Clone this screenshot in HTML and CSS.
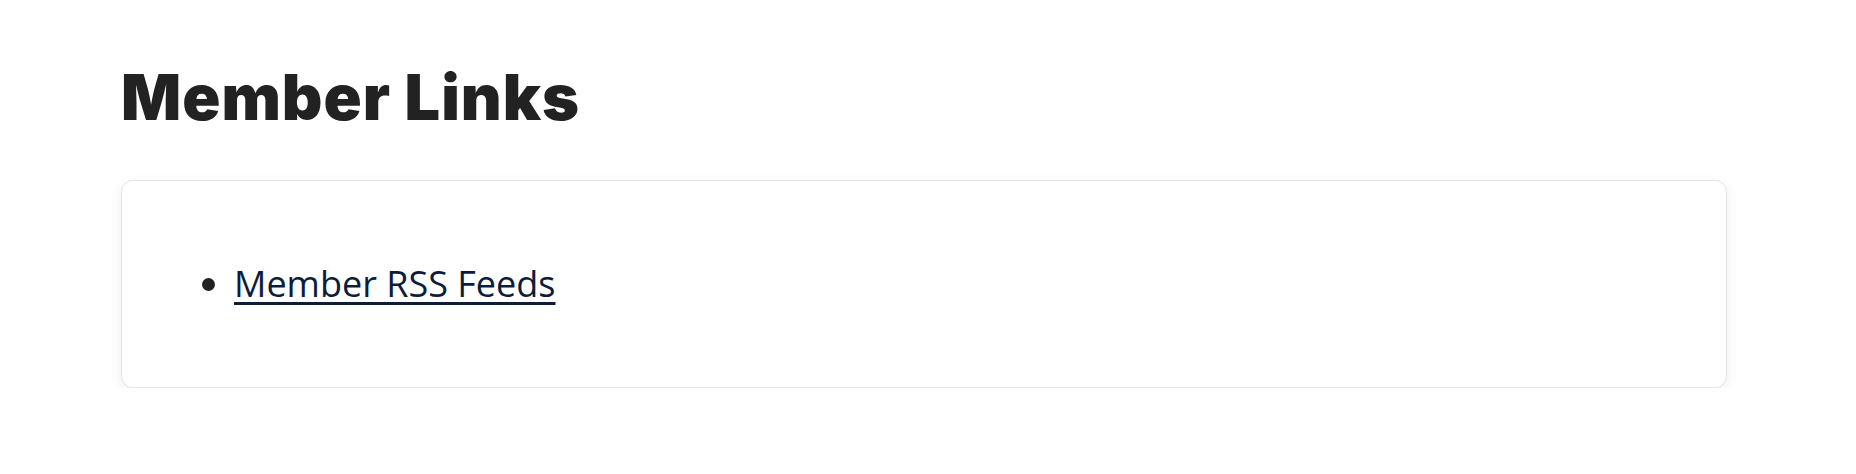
FILE: index.html
```html
<!DOCTYPE html>
<html lang="en">
<head>
<meta charset="utf-8">
<title>Member Links</title>
<link rel="stylesheet" href="styles.css">
</head>
<body>
<main class="page">
  <h1 class="title">Member Links</h1>
  <section class="card">
    <ul class="links">
      <li><a class="link" href="#">Member RSS Feeds</a></li>
    </ul>
  </section>
</main>
</body>
</html>
```
FILE: styles.css
```css
html, body {
  margin: 0;
  padding: 0;
  background: #ffffff;
}
.page {
  padding: 60px 129px 0 121px;
}
.title {
  margin: 0 0 44px 0;
  font-family: Inter, "Liberation Sans", sans-serif;
  font-weight: 900;
  font-size: 63px;
  line-height: 1.2;
  color: #222222;
  letter-spacing: 1px;
}
.card {
  border: 1px solid #e4e4e4;
  border-radius: 12px;
  box-shadow: 0 3px 12px rgba(0, 0, 0, 0.07);
  padding: 40px 72px;
  background: #fff;
}
.links {
  margin: 36px 0;
  padding-left: 40px;
  font-family: "Open Sans", "Noto Sans", sans-serif;
  font-size: 36px;
  line-height: 1.5;
  color: #222;
}
.link {
  color: #0b1d3a;
  text-decoration: underline;
  text-decoration-thickness: 3px;
  text-underline-offset: 5px;
}
```
